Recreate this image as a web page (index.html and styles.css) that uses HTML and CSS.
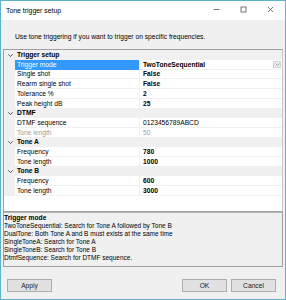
FILE: index.html
```html
<!DOCTYPE html>
<html lang="en">
<head>
  <meta charset="UTF-8" />
  <title>Tone trigger setup</title>
  <link rel="stylesheet" href="styles.css">
</head>
<body>
  <div class="window">
    <div class="titlebar">
      <span class="title">Tone trigger setup</span>
      <div class="controls">
        <svg class="ctl" width="7" height="7" viewBox="0 0 7 7"><line x1="0.5" y1="3.5" x2="6.5" y2="3.5" /></svg>
        <svg class="ctl" width="7" height="7" viewBox="0 0 7 7"><rect x="1" y="1" width="5" height="5" /></svg>
        <svg class="ctl" width="7" height="7" viewBox="0 0 7 7"><line x1="1" y1="1" x2="6" y2="6" /><line x1="6" y1="1" x2="1" y2="6" /></svg>
      </div>
    </div>

    <div class="client">
      <p class="intro">Use tone triggering if you want to trigger on specific frequencies.</p>

      <div class="grid">
        <div class="row cat"><span class="glyph"><svg width="5" height="3" viewBox="0 0 5 3"><polyline points="0.3,0.3 2.5,2.5 4.7,0.3" /></svg></span><span class="label">Trigger setup</span><span class="value"></span></div>
        <div class="row sel"><span class="glyph"></span><span class="label">Trigger mode</span><span class="value"><b>TwoToneSequential</b><span class="drop"><svg width="5" height="3" viewBox="0 0 5 3"><polyline points="0.5,0.5 2.5,2.5 4.5,0.5" /></svg></span></span></div>
        <div class="row"><span class="glyph"></span><span class="label">Single shot</span><span class="value"><b>False</b></span></div>
        <div class="row"><span class="glyph"></span><span class="label">Rearm single shot</span><span class="value"><b>False</b></span></div>
        <div class="row"><span class="glyph"></span><span class="label">Tolerance %</span><span class="value"><b>2</b></span></div>
        <div class="row"><span class="glyph"></span><span class="label">Peak height dB</span><span class="value"><b>25</b></span></div>
        <div class="row cat"><span class="glyph"><svg width="5" height="3" viewBox="0 0 5 3"><polyline points="0.3,0.3 2.5,2.5 4.7,0.3" /></svg></span><span class="label">DTMF</span><span class="value"></span></div>
        <div class="row"><span class="glyph"></span><span class="label">DTMF sequence</span><span class="value">0123456789ABCD</span></div>
        <div class="row off"><span class="glyph"></span><span class="label">Tone length</span><span class="value">50</span></div>
        <div class="row cat"><span class="glyph"><svg width="5" height="3" viewBox="0 0 5 3"><polyline points="0.3,0.3 2.5,2.5 4.7,0.3" /></svg></span><span class="label">Tone A</span><span class="value"></span></div>
        <div class="row"><span class="glyph"></span><span class="label">Frequency</span><span class="value"><b>780</b></span></div>
        <div class="row"><span class="glyph"></span><span class="label">Tone length</span><span class="value"><b>1000</b></span></div>
        <div class="row cat"><span class="glyph"><svg width="5" height="3" viewBox="0 0 5 3"><polyline points="0.3,0.3 2.5,2.5 4.7,0.3" /></svg></span><span class="label">Tone B</span><span class="value"></span></div>
        <div class="row"><span class="glyph"></span><span class="label">Frequency</span><span class="value"><b>600</b></span></div>
        <div class="row"><span class="glyph"></span><span class="label">Tone length</span><span class="value"><b>3000</b></span></div>
      </div>

      <div class="help">
        <div class="help-title">Trigger mode</div>
        <div>TwoToneSequential: Search for Tone A followed by Tone B</div>
        <div>DualTone: Both Tone A and B must exists at the same time</div>
        <div>SingleToneA: Search for Tone A</div>
        <div>SingleToneB: Search for Tone B</div>
        <div>DtmfSequence: Search for DTMF sequence.</div>
      </div>

      <div class="buttons">
        <button class="btn">Apply</button>
        <span class="spacer"></span>
        <button class="btn">OK</button>
        <button class="btn">Cancel</button>
      </div>
    </div>
  </div>
</body>
</html>
```

FILE: styles.css
```css
* {
  box-sizing: border-box;
}

body {
  margin: 0;
  font-family: "Liberation Sans", Arial, sans-serif;
  font-size: 6.7px;
  color: #000;
  background: #fff;
}

.window {
  width: 286px;
  height: 300px;
  border: 1px solid #5fb3c8;
  display: flex;
  flex-direction: column;
  background: #f0f0f0;
}

.titlebar {
  height: 19px;
  background: #fff;
  display: flex;
  align-items: center;
  padding-left: 5px;
  flex-shrink: 0;
}

.title {
  font-size: 6.9px;
  margin-top: -1px;
}

.controls {
  margin-left: auto;
  display: flex;
  gap: 20px;
  padding-right: 11px;
  margin-top: -2px;
}

.ctl line,
.ctl rect {
  stroke: #555;
  stroke-width: 0.8;
  fill: none;
}

.client {
  flex: 1;
  display: flex;
  flex-direction: column;
  padding: 0 1px;
}

.intro {
  margin: 0;
  height: 29px;
  padding: 12px 0 0 13px;
  line-height: 9px;
}

.grid {
  height: 163px;
  background: #fff;
  border: 1px solid #a0a0a0;
  border-right-color: #c8c8c8;
  margin: 0 1px;
}

.row {
  display: grid;
  grid-template-columns: 11px 124px 1fr;
  height: 9.71px;
  line-height: 9px;
}

.row .glyph {
  background: #f0f0f0;
  display: flex;
  align-items: center;
  justify-content: center;
  padding-left: 1px;
}

.row .glyph polyline {
  fill: none;
  stroke: #444;
  stroke-width: 0.9;
}

.row .label {
  padding-left: 2px;
  border-bottom: 1px solid #f0f0f0;
  white-space: nowrap;
}

.row .value {
  padding-left: 3px;
  border-bottom: 1px solid #f0f0f0;
  border-left: 1px solid #f0f0f0;
  display: flex;
  align-items: flex-start;
  white-space: nowrap;
}

.row b {
  font-weight: bold;
}

.row.cat {
  background: #f0f0f0;
  font-weight: bold;
}

.row.cat .label,
.row.cat .value {
  border-color: #f0f0f0;
}

.row.sel .label {
  background: #3399ff;
  color: #fff;
  border-bottom-color: #3399ff;
}

.row.off {
  color: #a0a0a0;
}

.drop {
  margin-left: auto;
  margin-right: 1px;
  margin-top: 1px;
  width: 8px;
  height: 7px;
  background: #ececec;
  border: 1px solid #d0d0d0;
  display: flex;
  align-items: center;
  justify-content: center;
}

.drop polyline {
  fill: none;
  stroke: #888;
  stroke-width: 0.8;
}

.help {
  height: 55px;
  margin: 0 1px;
  border: 1px solid #a0a0a0;
  border-top-color: #b4b4b4;
  padding: 1px 0 0 0;
  font-size: 6.5px;
  line-height: 8px;
}

.help-title {
  font-size: 6.7px;
  font-weight: bold;
}

.buttons {
  display: flex;
  margin-top: 12px;
  padding: 0 8px 0 5px;
  gap: 4px;
}

.spacer {
  flex: 1;
}

.btn {
  width: 45px;
  height: 13px;
  padding: 0;
  font-family: inherit;
  font-size: 6.7px;
  background: #e1e1e1;
  border: 1px solid #adadad;
  color: #222;
}
```
